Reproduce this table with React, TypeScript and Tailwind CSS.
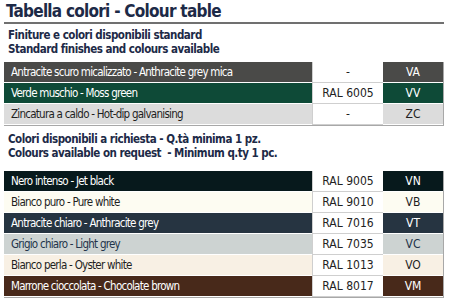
import React from 'react';

type Row = {
  name: string;
  ral: string;
  code: string;
  bg: string;
  fg: string;
};

const standard: Row[] = [
  { name: 'Antracite scuro micalizzato - Anthracite grey mica', ral: '-', code: 'VA', bg: 'bg-[#4a4a48]', fg: 'text-white' },
  { name: 'Verde muschio - Moss green', ral: 'RAL 6005', code: 'VV', bg: 'bg-[#0e4a37]', fg: 'text-white' },
  { name: 'Zincatura a caldo - Hot-dip galvanising', ral: '-', code: 'ZC', bg: 'bg-[#dcdcdc]', fg: 'text-[#1f1f1f]' },
];

const onRequest: Row[] = [
  { name: 'Nero intenso - Jet black', ral: 'RAL 9005', code: 'VN', bg: 'bg-[#07191c]', fg: 'text-white' },
  { name: 'Bianco puro - Pure white', ral: 'RAL 9010', code: 'VB', bg: 'bg-[#fdfcf2]', fg: 'text-[#1f1f1f]' },
  { name: 'Antracite chiaro - Anthracite grey', ral: 'RAL 7016', code: 'VT', bg: 'bg-[#263441]', fg: 'text-white' },
  { name: 'Grigio chiaro - Light grey', ral: 'RAL 7035', code: 'VC', bg: 'bg-[#cdd3d2]', fg: 'text-[#23344a]' },
  { name: 'Bianco perla - Oyster white', ral: 'RAL 1013', code: 'VO', bg: 'bg-[#f8f0e4]', fg: 'text-[#1f1f1f]' },
  { name: 'Marrone cioccolata - Chocolate brown', ral: 'RAL 8017', code: 'VM', bg: 'bg-[#48291a]', fg: 'text-white' },
];

const ColourTable = ({ rows }: { rows: Row[] }) => (
  <div className="mr-[6px] border-r border-b border-[#a8a8a8]">
    {rows.map((row) => (
      <div key={row.code} className="flex h-[21px] text-[12px] leading-[21px]">
        <div className={`flex-1 pl-[7px] text-[11.5px] tracking-[-0.75px] border-b border-white ${row.bg} ${row.fg}`}>
          {row.name}
        </div>
        <div className="w-[71px] bg-white text-center text-[#222] border-l border-b border-[#cfcfcf]">{row.ral}</div>
        <div className={`w-[60px] text-center border-b border-white ${row.bg} ${row.fg}`}>{row.code}</div>
      </div>
    ))}
  </div>
);

const App = () => {
  return (
    <div
      className="w-[450px] h-[300px] bg-white overflow-hidden pl-[4px]"
      style={{ fontFamily: '"Liberation Sans Narrow", "DejaVu Sans Condensed", Roboto, sans-serif', fontStretch: 'condensed' }}
    >
      <h1 className="pl-[2px] pt-[1px] text-[17px] leading-[20px] font-bold tracking-[-0.75px] text-[#1d2a47]">
        Tabella colori - Colour table
      </h1>
      <div className="mr-[6px] mt-[1px] h-[2px] bg-[#707070]" />
      <div className="pl-[4px] pt-[4px] pb-[6px] text-[11.5px] leading-[14px] font-bold tracking-[-0.5px] text-[#1d2a47]">
        <p>Finiture e colori disponibili standard</p>
        <p>Standard finishes and colours available</p>
      </div>
      <ColourTable rows={standard} />
      <div className="pl-[4px] pt-[6px] pb-[11px] text-[11.5px] leading-[14px] font-bold tracking-[-0.5px] text-[#1d2a47]">
        <p>Colori disponibili a richiesta - Q.tà minima 1 pz.</p>
        <p>Colours available on request&nbsp; - Minimum q.ty 1 pc.</p>
      </div>
      <ColourTable rows={onRequest} />
    </div>
  );
};

export default App;
